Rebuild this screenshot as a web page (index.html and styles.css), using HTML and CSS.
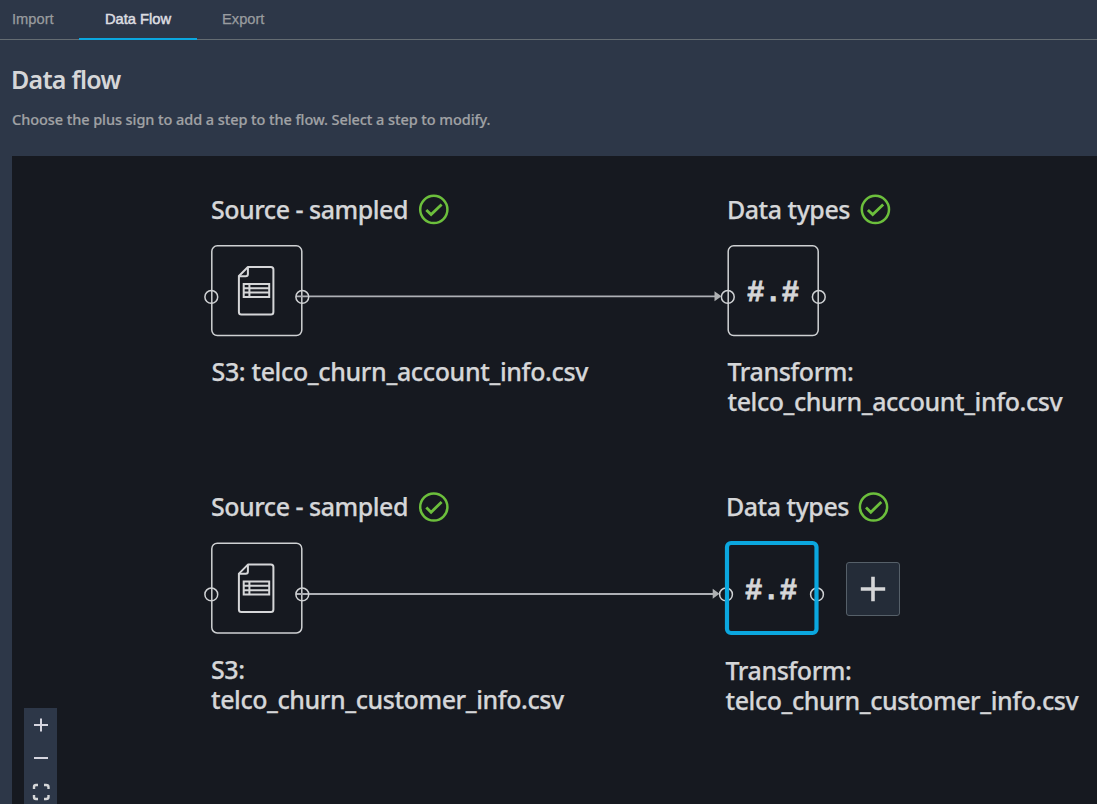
FILE: index.html
```html
<!DOCTYPE html>
<html lang="en">
<head>
<meta charset="utf-8">
<title>Data flow</title>
<link rel="stylesheet" href="styles.css">
</head>
<body>
<nav class="tabs">
  <a class="tab tab-import">Import</a>
  <a class="tab tab-active">Data Flow</a>
  <a class="tab tab-export">Export</a>
</nav>
<header class="heading">
  <h1 class="title">Data flow</h1>
  <p class="hint">Choose the plus sign to add a step to the flow. Select a step to modify.</p>
</header>
<main class="canvas">
  <svg class="graph" width="1085" height="648" viewBox="12 156 1085 648">
    <defs>
      <g id="check" fill="none" stroke="#6cbf3c">
        <circle r="13.6" stroke-width="2.5"/>
        <path d="M-7.5 .5 -2.7 5.2 7.8-5" stroke-width="2.8"/>
      </g>
      <g id="file" fill="none" stroke="#d5d6d8" stroke-width="2" stroke-linejoin="round">
        <path d="M9.5 1H32.5Q35 1 35 3.5V46Q35 48.5 32.5 48.5H3Q.5 48.5 .5 46V10Z"/>
        <path d="M9.5 1V8Q9.5 10.2 7.3 10.2H.5"/>
        <path d="M5.3 18H30.8V31H5.3ZM5.3 22.2H30.8M5.3 26.6H30.8M11 18V31" stroke-linejoin="miter"/>
      </g>
    </defs>
    <g fill="none" stroke="#cfd1d3" stroke-width="1.5">
      <rect x="211.8" y="245.8" width="90" height="89.8" rx="5.5"/>
      <rect x="728.2" y="245.8" width="90" height="89.8" rx="5.5"/>
      <rect x="211.8" y="543.2" width="90" height="89.8" rx="5.5"/>
      <path d="M296 296.3H717M296 594H715" stroke="#aeb0b5" stroke-width="1.8"/>
      <circle cx="211.3" cy="296.9" r="6.4"/><circle cx="302.3" cy="296.9" r="6.4"/>
      <circle cx="727.8" cy="296.9" r="6.4"/><circle cx="818.8" cy="296.9" r="6.4"/>
      <circle cx="211.3" cy="594.4" r="6.4"/><circle cx="302.3" cy="594.4" r="6.4"/>
      <circle cx="726" cy="594.4" r="6.4"/><circle cx="817" cy="594.4" r="6.4"/>
    </g>
    <path d="M714.5 291.2 721.5 296.2 714.5 301.2ZM712.7 588.8 719.5 593.8 712.7 598.8Z" fill="#aeb0b2"/>
    <rect x="727" y="543" width="89.5" height="90" rx="4" fill="none" stroke="#0ba7df" stroke-width="4.2"/>
    <use href="#file" x="238.4" y="266"/>
    <use href="#file" x="238.4" y="563.6"/>
    <use href="#check" x="433.8" y="209.4"/>
    <use href="#check" x="875.4" y="209.4"/>
    <use href="#check" x="433.8" y="507"/>
    <use href="#check" x="873.5" y="507"/>
  </svg>
  <div class="label source-top">Source - sampled</div>
  <div class="label types-top">Data types</div>
  <div class="label source-bottom">Source - sampled</div>
  <div class="label types-bottom">Data types</div>
  <div class="label file-name file-top">S3: telco_churn_account_info.csv</div>
  <div class="label file-name transform-top">Transform:<br>telco_churn_account_info.csv</div>
  <div class="label file-name file-bottom">S3:<br>telco_churn_customer_info.csv</div>
  <div class="label file-name transform-bottom">Transform:<br>telco_churn_customer_info.csv</div>
  <div class="hash hash-top">#.#</div>
  <div class="hash hash-bottom">#.#</div>
  <button class="add" aria-label="Add step"><svg width="26" height="26" viewBox="0 0 26 26"><path d="M.8 13H25.2M13 .8V25.2" stroke="#d5d6d8" stroke-width="3.6"/></svg></button>
  <div class="zoom">
    <svg width="33" height="33" viewBox="0 0 33 33"><path d="M10 17H24M17 10.5V23.5" stroke="#d5d5df" stroke-width="2"/></svg>
    <svg width="33" height="33" viewBox="0 0 33 33"><path d="M10 17H24" stroke="#d5d5df" stroke-width="2"/></svg>
    <svg width="33" height="33" viewBox="0 0 33 33"><path d="M10 15V13Q10 11 12 11H14M20 11H22Q24.5 11 24.5 13V15M10 21V23Q10 25 12 25H14M20 25H22Q24.5 25 24.5 23V21" fill="none" stroke="#d5d6d8" stroke-width="2.4"/></svg>
  </div>
</main>
</body>
</html>
```
FILE: styles.css
```css
* { box-sizing: border-box; }
body { margin: 0; height: 804px; overflow: hidden; background: #2d3748; font-family: "Noto Sans", sans-serif; color: #d5d6d8; display: flex; flex-direction: column; }
.tabs { height: 40px; flex: none; display: flex; border-bottom: 1px solid #646c72; font: 14.7px/38px "Liberation Sans", Arial, sans-serif; color: #999c9f; }
.tab { height: 40px; -webkit-text-stroke: .25px #999c9f; }
.tab-import { width: 79px; padding-left: 12px; }
.tab-active { width: 118px; text-align: center; color: #dcdde0; border-bottom: 2px solid #0ba7df; -webkit-text-stroke: .5px #dcdde0; }
.tab-export { padding-left: 25px; }
.heading { height: 116px; flex: none; padding: 23px 12px 0 11px; }
.title { margin: 0; font-size: 25px; line-height: 32px; font-weight: 600; letter-spacing: -.75px; }
.hint { margin: 14px 0 0 1px; font-size: 14.5px; line-height: 20px; color: #a0a2a5; font-weight: 500; letter-spacing: -.07px; -webkit-text-stroke: .2px #a0a2a5; }
.canvas { position: relative; flex: 1; margin-left: 12px; background: #161920; overflow: hidden; }
.graph { display: block; }
.label { position: absolute; font-size: 25px; line-height: 29.5px; font-weight: 500; white-space: nowrap; letter-spacing: -.48px; -webkit-text-stroke: .25px #d5d6d8; }
.source-top { left: 199px; top: 39px; }
.types-top { left: 715px; top: 39px; }
.source-bottom { left: 199px; top: 336px; }
.types-bottom { left: 714px; top: 336px; }
.file-name { letter-spacing: -.43px; }
.file-top { left: 199.5px; top: 201px; letter-spacing: -.36px; }
.transform-top { left: 715.5px; top: 201px; }
.file-bottom { left: 199px; top: 499px; }
.transform-bottom { left: 713.5px; top: 500px; }
.hash { position: absolute; font: bold 29px/36px "Liberation Mono", monospace; -webkit-text-stroke: .8px #d5d6d8; }
.hash-top { left: 735px; top: 119.5px; }
.hash-bottom { left: 733px; top: 417.5px; }
.add { position: absolute; left: 834px; top: 406px; width: 54px; height: 54px; padding: 0; display: flex; align-items: center; justify-content: center; background: #242c38; border: 1px solid #566069; border-radius: 3px; }
.zoom { position: absolute; left: 12px; top: 552px; width: 33px; display: flex; flex-direction: column; background: #2d3748; }
.zoom svg { display: block; }
```
